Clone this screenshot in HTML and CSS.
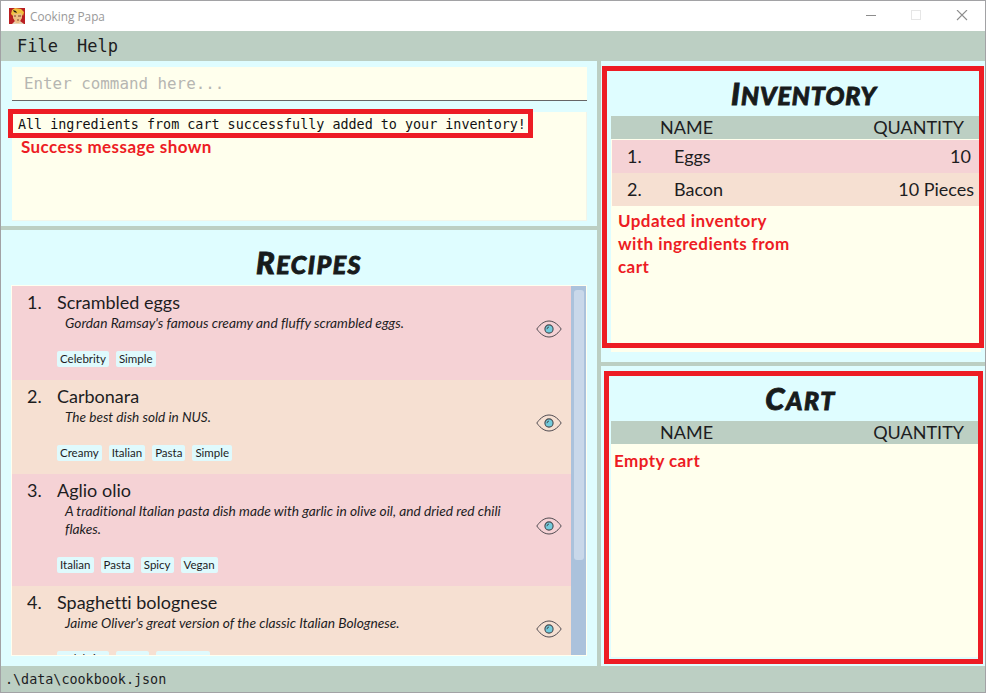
FILE: index.html
```html
<!DOCTYPE html>
<html lang="en">
<head>
<meta charset="utf-8">
<title>Cooking Papa</title>
<link rel="stylesheet" href="styles.css">
</head>
<body>
<svg class="defs" width="0" height="0" aria-hidden="true">
  <symbol id="eye" viewBox="0 0 26 18">
    <path d="M.8 9C3 6 7 1 13 1s10 5 12.200 8C23 12 19 17 13 17S3 12 .8 9Z" fill="none" stroke="#4f4a50" stroke-width="1"/>
    <circle cx="13" cy="9" r="4.100" fill="#73cbdc" stroke="#454a50" stroke-width="1.100"/>
    <path d="M11 9.200q0-2 2-2.200" fill="none" stroke="#454a50" stroke-width="1"/>
  </symbol>
</svg>
<div class="window">
  <header class="titlebar">
    <svg class="logo" viewBox="0 0 16 16">
      <rect width="16" height="16" fill="#b91f22"/>
      <path d="M3 16l3-3h5l4 3z" fill="#e7d3b5"/>
      <path d="M4 5l9-1v6l-3 5H7l-3-5z" fill="#edbd83"/>
      <path d="M2 6l1-4 3-2 6 1 3 3-1 4-2-3-4 1-3-1-1 3z" fill="#efc13e"/>
      <path d="M4 2l3 1 1 2-3-1z" fill="#241c17"/>
      <path d="M5 8h2M9 8h3M8 12h2" stroke="#7b432c" stroke-width="1"/>
    </svg>
    <span class="app-name">Cooking Papa</span>
    <svg class="controls" viewBox="0 0 104 12">
      <path d="M1 5.500h10" stroke="#8d8d8d"/>
      <rect x="46.500" y=".5" width="9" height="9" fill="none" stroke="#e6e6e6"/>
      <path d="M92 0l10 10M102 0L92 10" stroke="#8d8d8d" stroke-width="1.100"/>
    </svg>
  </header>
  <nav class="menubar"><span>File</span><span>Help</span></nav>
  <main class="main">
    <div class="left">
      <section class="pane command-pane">
        <div class="command">Enter command here...</div>
        <div class="result">
          <div class="message">All ingredients from cart successfully added to your inventory!</div>
          <p class="note success">Success message shown</p>
        </div>
      </section>
      <section class="pane recipe-pane">
        <h2 class="t-recipes">Recipes</h2>
        <div class="recipes">
          <div class="list">
            <article class="recipe">
              <span class="num">1.</span>
              <div class="body"><h3>Scrambled eggs</h3><p class="desc">Gordan Ramsay's famous creamy and fluffy scrambled eggs.</p><div class="tags"><span>Celebrity</span><span>Simple</span></div></div>
              <svg class="eye"><use href="#eye"/></svg>
            </article>
            <article class="recipe">
              <span class="num">2.</span>
              <div class="body"><h3>Carbonara</h3><p class="desc short-desc">The best dish sold in NUS.</p><div class="tags"><span>Creamy</span><span>Italian</span><span>Pasta</span><span>Simple</span></div></div>
              <svg class="eye"><use href="#eye"/></svg>
            </article>
            <article class="recipe">
              <span class="num">3.</span>
              <div class="body"><h3>Aglio olio</h3><p class="desc">A traditional Italian pasta dish made with garlic in olive oil, and dried red chili<br>flakes.</p><div class="tags"><span>Italian</span><span>Pasta</span><span>Spicy</span><span>Vegan</span></div></div>
              <svg class="eye"><use href="#eye"/></svg>
            </article>
            <article class="recipe">
              <span class="num">4.</span>
              <div class="body"><h3>Spaghetti bolognese</h3><p class="desc">Jaime Oliver's great version of the classic Italian Bolognese.</p><div class="tags"><span>Celebrity</span><span>Pasta</span><span>European</span></div></div>
              <svg class="eye"><use href="#eye"/></svg>
            </article>
          </div>
          <div class="scrollbar"><div class="thumb"></div></div>
        </div>
      </section>
    </div>
    <div class="right">
      <section class="pane stock inventory">
        <h2 class="t-inventory">Inventory</h2>
        <div class="table">
          <div class="thead"><span>NAME</span><span>QUANTITY</span></div>
          <div class="row"><span class="num">1.</span><span class="name">Eggs</span><span class="qty short">10</span></div>
          <div class="row"><span class="num">2.</span><span class="name">Bacon</span><span class="qty">10 Pieces</span></div>
          <p class="note inv-note">Updated inventory<br>with ingredients from<br>cart</p>
        </div>
        <div class="frame"></div>
      </section>
      <section class="pane stock cart">
        <h2 class="t-cart">Cart</h2>
        <div class="table">
          <div class="thead"><span>NAME</span><span>QUANTITY</span></div>
          <p class="note cart-note">Empty cart</p>
        </div>
        <div class="frame"></div>
      </section>
    </div>
  </main>
  <footer class="status">.\data\cookbook.json</footer>
</div>
</body>
</html>
```
FILE: styles.css
```css
* { box-sizing: border-box; }
body { margin: 0; font-family: Lato, sans-serif; color: #1d1d1f; font-variant-ligatures: none; }
h2, h3, p { margin: 0; }
.defs { position: absolute; }

.window {
  width: 986px; height: 693px; overflow: hidden;
  display: flex; flex-direction: column;
  border: 1px solid #a2a2a5; background: #bccfc3;
}
.titlebar {
  flex: 0 0 30px; display: flex; align-items: center;
  padding: 0 16px 1px 8px; background: #fff;
}
.logo { width: 16px; height: 16px; margin-right: 5px; }
.app-name { font: 11.8px/16px "Open Sans", sans-serif; color: #999; flex: 1; }
.controls { width: 104px; height: 12px; }
.menubar {
  flex: 0 0 30px; height: 30px; min-height: 0; overflow: hidden; display: flex; gap: 19px; padding-left: 16px;
  font: 17px/31px "DejaVu Sans Mono", monospace;
}
.main { flex: 0 0 605px; display: flex; gap: 4px; }
.left { width: 596px; display: flex; flex-direction: column; gap: 4px; }
.right { width: 384px; display: flex; flex-direction: column; gap: 4px; }
.pane { background: #dffdff; }

.command-pane { height: 165px; padding: 6px 10px 5px 11px; display: flex; flex-direction: column; gap: 11px; }
.command {
  height: 34px; padding-left: 12px; background: #ffffed; border-bottom: 1px solid #666;
  font: 15.85px/33px "DejaVu Sans Mono", monospace; color: #b6b6b2;
}
.result { height: 109px; background: #ffffed; border: solid #f2f5ea; border-width: 0 1px 1px 0; }
.message {
  width: 525px; height: 29px; margin: -3px 0 0 -4px; padding-left: 5px; white-space: nowrap;
  border: 5px solid #ed1c24; font: 13.4px/21px "DejaVu Sans Mono", monospace; color: #111;
}
.note { font-weight: 700; font-size: 17px; line-height: 23px; letter-spacing: .43px; color: #ed1c24; }
.success { margin: -3px 0 0 9px; }

h2 {
  font: italic 900 25px/40px Lato, sans-serif; text-transform: uppercase; letter-spacing: 1px;
  text-align: center; color: #171b1c; -webkit-text-stroke: .9px #171b1c;
}
h2::first-letter { font-size: 31px; line-height: 1; }
.recipe-pane { height: 436px; padding: 14px 10px 10px; display: flex; flex-direction: column; }
.t-recipes { height: 41px; padding-left: 20px; letter-spacing: 1.5px; }
.recipes { height: 371px; border: 1px solid #fffff0; display: flex; }
.list { width: 559px; overflow: hidden; }
.recipe { display: flex; padding-left: 15px; height: 94px; background: #f5d2d5; }
.recipe:nth-child(even) { background: #f6e0d2; }
.recipe:nth-child(3) { height: 112px; }
.recipe .num { width: 30px; font-size: 18px; line-height: 22px; padding-top: 5px; }
.recipe .body { width: 479px; padding-top: 5px; }
h3 { font-size: 18px; font-weight: 400; line-height: 22px; }
.desc { padding: 1px 0 0 8px; font-size: 13.75px; line-height: 18px; font-style: italic; white-space: nowrap; }
.short-desc { font-size: 13.6px; }
.tags { display: flex; gap: 7px; padding-top: 19px; }
.tags span { height: 16px; padding: 0 3px; border-radius: 2px; background: #dffafd; font-size: 11.5px; line-height: 16px; }
.eye { width: 26px; height: 18px; align-self: center; margin-top: -8px; }
.scrollbar { width: 15px; background: #abc2dc; padding: 4px 2px 0 3px; }
.thumb { height: 270px; border-radius: 3px; background: #c9d8ea; }

.stock { position: relative; padding: 0 4px 0 10px; }
.stock h2 { height: 55px; padding: 14px 0 0 16px; }
.stock .t-cart { padding-left: 9px; letter-spacing: 1.5px; }
.inventory { height: 301px; }
.cart { height: 300px; }
.table { height: 236px; background: #ffffed; }
.thead {
  height: 23px; margin-bottom: 1px; padding: 0 17px 0 49px; background: #bccfc3;
  display: flex; justify-content: space-between; font-size: 18px; line-height: 23px;
}
.row { height: 33px; margin-left: 1px; padding: 0 7px 0 15px; display: flex; font-size: 18px; line-height: 33px; background: #f5d2d5; }
.row:nth-child(odd) { background: #f6e0d2; }
.row .num { width: 47px; }
.row .name { flex: 1; }
.row .short { padding-right: 3px; }
.inv-note { padding: 3px 0 0 7px; }
.cart-note { padding: 4px 0 0 3px; }
.frame { position: absolute; border: 5px solid #ed1c24; }
.inventory .frame { left: 1px; top: 5px; width: 382px; height: 282px; }
.cart .frame { left: 3px; top: 5px; width: 379px; height: 293px; }

.status { flex: 1; padding-left: 4px; font: 13.4px/27px "DejaVu Sans Mono", monospace; }
```
